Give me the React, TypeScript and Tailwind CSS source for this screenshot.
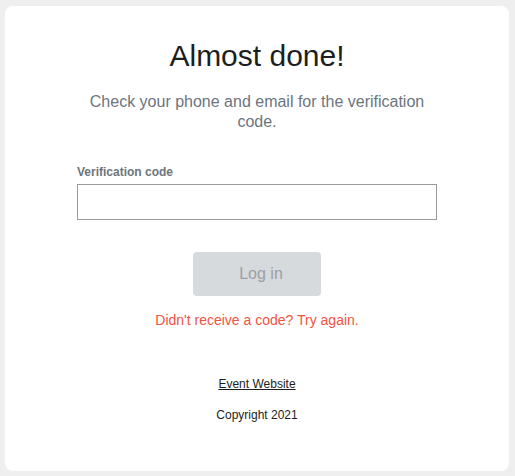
import React from "react";

export default function App() {
  return (
    <div
      className="min-h-[476px] w-[515px] bg-[#efefef] pt-[6px] pl-[5px] pr-[6px] pb-[5px]"
      style={{ fontFamily: '"Liberation Sans", Arial, sans-serif' }}
    >
      <div className="flex h-[465px] w-[504px] flex-col items-center rounded-[8px] bg-white pt-[32px]">
        <h1 className="text-[30px] leading-[36px] text-[#1c1e21]">Almost done!</h1>
        <p className="mt-[18px] w-[360px] text-center text-[16px] leading-[20px] text-[#6c757d]">
          Check your phone and email for the verification code.
        </p>
        <div className="mt-[32px] flex w-[360px] flex-col">
          <label className="text-[12px] font-bold leading-[16px] text-[#6c757d]">
            Verification code
          </label>
          <input
            type="text"
            className="mt-[4px] h-[36px] w-[360px] border border-[#9a9a9a] bg-white px-2 outline-none"
          />
        </div>
        <button
          disabled
          className="mt-[32px] h-[44px] w-[128px] rounded-[4px] bg-[#d7dadd] pl-[8px] text-[16px] text-[#9aa0a6]"
        >
          Log in
        </button>
        <p className="mt-[14px] text-[14px] leading-[20px] text-[#f0533f]">
          Didn't receive a code? Try again.
        </p>
        <a href="#" className="mt-[46px] text-[12px] leading-[16px] text-[#1c1e21] underline">
          Event Website
        </a>
        <p className="mt-[15px] text-[12px] leading-[16px] text-[#1c1e21]">Copyright 2021</p>
      </div>
    </div>
  );
}
